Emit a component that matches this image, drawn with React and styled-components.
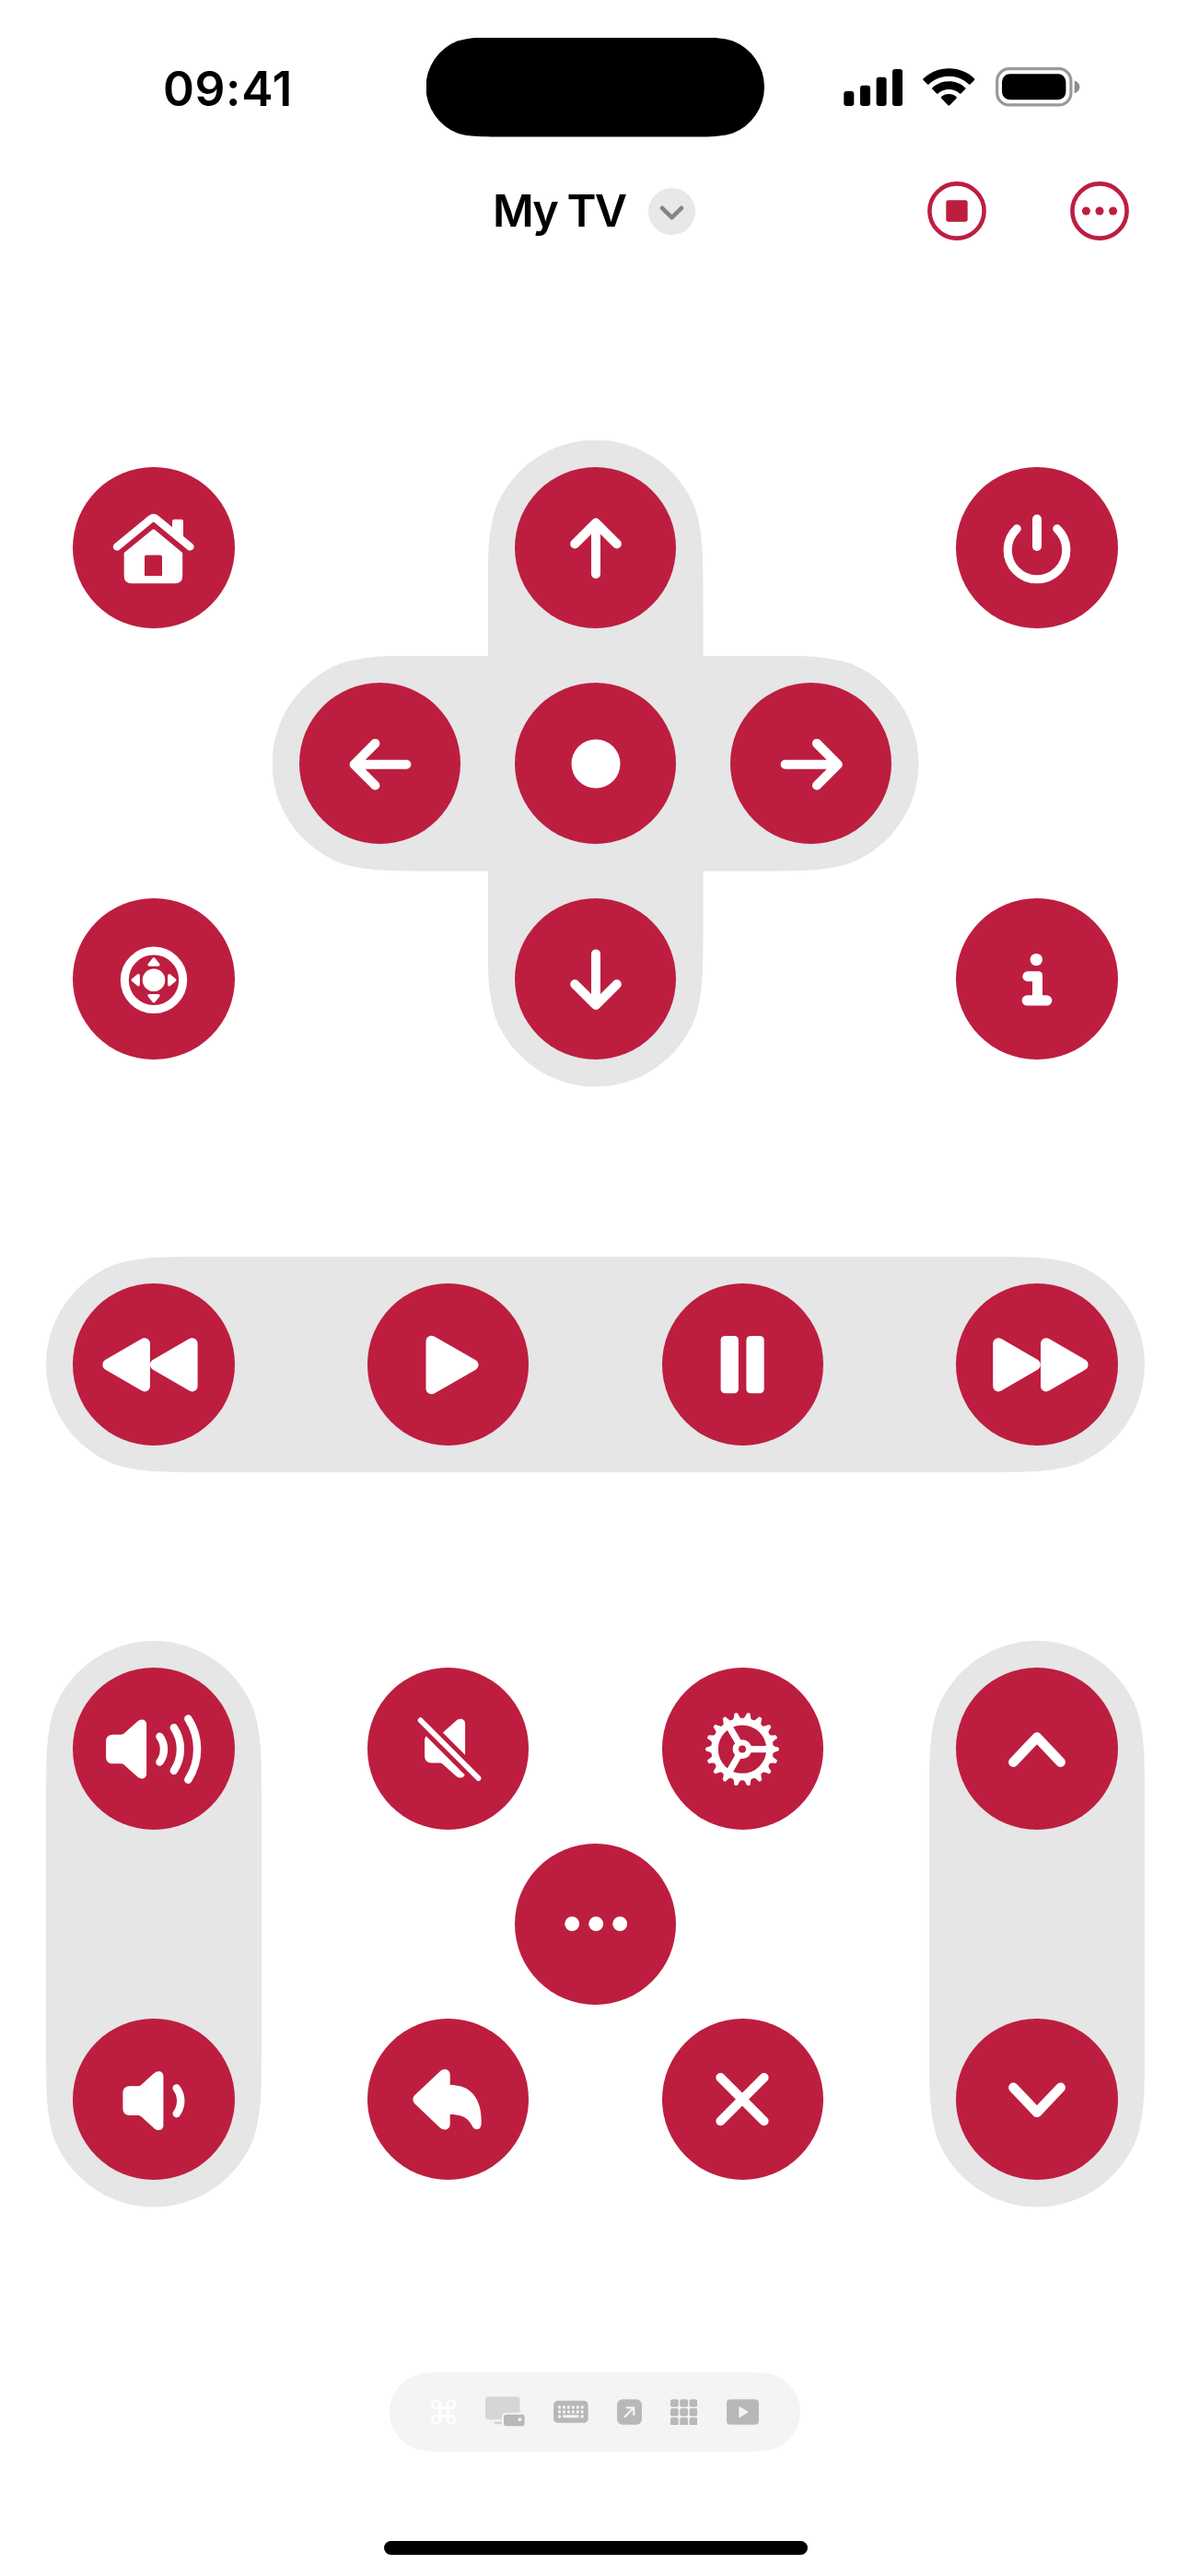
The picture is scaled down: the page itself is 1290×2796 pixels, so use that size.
import React from "react";
import styled, { createGlobalStyle } from "styled-components";

const CRIMSON = "#bd1e40";
const TRACK = "#e6e6e6";
const SOFT = "#b8b8b8";
const BAR = "#f4f4f4";

const GlobalStyle = createGlobalStyle`
  * { box-sizing: border-box; }
  body {
    margin: 0;
    background: #ffffff;
    font-family: Inter, "Liberation Sans", sans-serif;
    color: #000000;
  }
`;

/* Capsule outline whose straight edges ease gradually into the round ends. */
const capsule = (w, h) => {
  const flip = h > w;
  const long = flip ? h : w;
  const r = (flip ? w : h) / 2;
  const s = r * 2;
  const p = (x, y) => (flip ? `${y.toFixed(2)} ${x.toFixed(2)}` : `${x.toFixed(2)} ${y.toFixed(2)}`);
  const a = 1.52866 * r;
  const b = 1.08849 * r;
  const c = 0.86841 * r;
  const d = 0.63149 * r;
  const e = 0.07491 * r;
  const sweep = flip ? 0 : 1;
  return [
    `M${p(a, 0)}`,
    `L${p(long - a, 0)}`,
    `C${p(long - b, 0)} ${p(long - c, 0)} ${p(long - d, e)}`,
    `A${r} ${r} 0 0 ${sweep} ${p(long, r)}`,
    `A${r} ${r} 0 0 ${sweep} ${p(long - d, s - e)}`,
    `C${p(long - c, s)} ${p(long - b, s)} ${p(long - a, s)}`,
    `L${p(a, s)}`,
    `C${p(b, s)} ${p(c, s)} ${p(d, s - e)}`,
    `A${r} ${r} 0 0 ${sweep} ${p(0, r)}`,
    `A${r} ${r} 0 0 ${sweep} ${p(d, e)}`,
    `C${p(c, 0)} ${p(b, 0)} ${p(a, 0)}Z`,
  ].join(" ");
};

const Capsule = styled.div`
  width: ${(p) => p.$w}px;
  height: ${(p) => p.$h}px;
  background: ${(p) => p.$color || TRACK};
  clip-path: path("${(p) => capsule(p.$w, p.$h)}");
`;

const Screen = styled.main`
  width: 1290px;
  height: 2796px;
  display: flex;
  flex-direction: column;
  background: #ffffff;
  overflow: hidden;
`;

const StatusBar = styled.header`
  display: grid;
  grid-template-columns: 462.5px 367.5px 1fr;
  align-items: center;
  height: 148.5px;
  padding-top: 40.5px;
`;

const Clock = styled.time`
  padding: 2px 0 0 177px;
  font-size: 51.5px;
  line-height: 60px;
  font-weight: 600;
  letter-spacing: 0.6px;
`;

const StatusIcons = styled.div`
  display: flex;
  align-items: center;
  padding-left: 86px;
  gap: 22px;

  svg { display: block; }
`;

const NavBar = styled.nav`
  display: flex;
  align-items: center;
  height: 64px;
  margin-top: 48.5px;
  padding: 0 64px 0 535px;
`;

const Title = styled.h1`
  width: 169px;
  margin: 0;
  font-size: 48.5px;
  line-height: 60px;
  font-weight: 600;
  letter-spacing: -1.8px;
  white-space: nowrap;
`;

const PlainButton = styled.button`
  display: block;
  padding: 0;
  border: 0;
  background: none;

  svg { display: block; }
`;

const NavActions = styled.div`
  display: flex;
  gap: 91px;
  margin-left: auto;
`;

const RoundButton = styled.button`
  display: flex;
  align-items: center;
  justify-content: center;
  flex: none;
  width: 175.5px;
  height: 175.5px;
  padding: 0;
  border: 0;
  border-radius: 50%;
  background: ${CRIMSON};

  svg { display: block; flex: none; }
`;

const DirectionSection = styled.section`
  display: flex;
  align-items: center;
  justify-content: space-between;
  height: 702px;
  margin-top: 216.5px;
  padding: 0 76.25px 0 79.25px;
`;

const SideColumn = styled.div`
  display: flex;
  flex-direction: column;
  justify-content: space-between;
  height: 643.5px;
`;

const Cross = styled.div`
  display: grid;
  grid-template: repeat(3, 234px) / repeat(3, 234px);
  place-items: center;
`;

const Beam = styled(Capsule)`
  grid-area: ${(p) => p.$area};
`;

const Cell = styled.div`
  grid-area: ${(p) => p.$area};
  z-index: 1;
`;

const TransportSection = styled.section`
  margin: 184.5px 0 0 50px;
`;

const TransportBar = styled(Capsule)`
  display: flex;
  align-items: center;
  justify-content: space-between;
  padding: 0 29.25px;
`;

const KeypadSection = styled.section`
  display: flex;
  align-items: center;
  justify-content: space-between;
  width: 1193px;
  margin: 183px 0 0 50px;
`;

const Rocker = styled(Capsule)`
  display: flex;
  flex-direction: column;
  align-items: center;
  justify-content: space-between;
  padding: 29.25px 0;
`;

const Cluster = styled.div`
  display: flex;
  flex-direction: column;
  justify-content: space-between;
  width: 495.2px;
  height: 555.75px;
`;

const ClusterRow = styled.div`
  display: flex;
  justify-content: ${(p) => (p.$single ? "center" : "space-between")};
`;

const ShortcutBar = styled(Capsule)`
  display: flex;
  align-items: center;
  gap: 31.2px;
  margin: 179.5px 0 0 423px;
  padding-left: 45.3px;
`;

const HomeIndicator = styled.div`
  width: 460px;
  height: 15px;
  margin: 97px 0 0 417px;
  border-radius: 8px;
  background: #000000;
`;

/* Glyphs share a canvas whose origin is the middle of the round key. */
const Glyph = ({ children }) => (
  <svg width="176" height="176" viewBox="-88 -88 176 176" fill="#fff" stroke="none">
    {children}
  </svg>
);

const Stroke = ({ d, w = 10 }) => (
  <path d={d} fill="none" stroke="#fff" strokeWidth={w} strokeLinecap="round" strokeLinejoin="round" />
);

const Triangle = ({ points }) => (
  <polygon points={points} stroke="#fff" strokeWidth="12" strokeLinejoin="round" />
);

const SpeakerBody = () => (
  <path d="M-44 -15.3H-36C-34 -15.3 -33 -15.8 -31.5 -17.2L-18.6 -28.8C-16.5 -30.7 -15 -31.4 -13 -31.4C-10 -31.4 -7.9 -29.4 -7.9 -26.4V27.4C-7.9 30.3 -10 32.4 -12.9 32.4C-15 32.4 -16.7 31.6 -18.6 29.8L-31.5 18.2C-33 16.8 -34 16.3 -36 16.3H-44C-49.3 16.3 -51.9 13.6 -51.9 8.4V-7.4C-51.9 -12.6 -49.3 -15.3 -44 -15.3Z" />
);

const icons = {
  home: (
    <Glyph>
      <Stroke w={8.4} d="M-40 -1.6L-3.2 -31.7Q-0.3 -34 2.6 -31.7L39.4 -1.6" />
      <path d="M20 -15V-29.3Q20 -31.3 22 -31.3H30Q32 -31.3 32 -29.3V-8Z" />
      <path
        fillRule="evenodd"
        d="M-32.3 5L-2.3 -19.6Q-0.3 -21.2 1.7 -19.6L31.2 5V30Q31.2 38.2 23 38.2H-24Q-32.3 38.2 -32.3 30ZM-8 7.5Q-10 7.5 -10 9.5V30H9V9.5Q9 7.5 7 7.5Z"
      />
    </Glyph>
  ),
  dpad: (
    <Glyph>
      <circle cx="0" cy="0.8" r="31.7" fill="none" stroke="#fff" strokeWidth="9" />
      <circle cx="0" cy="0.8" r="12.3" />
      {[0, 90, 180, 270].map((a) => (
        <path
          key={a}
          transform={`translate(0 0.8) rotate(${a})`}
          d="M0 -22.8L4.9 -16.8H-4.9Z"
          stroke="#fff"
          strokeWidth="3.4"
          strokeLinejoin="round"
        />
      ))}
    </Glyph>
  ),
  power: (
    <Glyph>
      <Stroke w={9.2} d="M-21.8 -21.2A31.8 31.8 0 1 0 21.8 -21.2" />
      <Stroke d="M0 -31.4V-2" />
    </Glyph>
  ),
  info: (
    <Glyph>
      <circle cx="-0.7" cy="-21.4" r="6.7" />
      <path d="M-10.2 -8.7H1.5Q6 -8.7 6 -4.2V17.3H10.7A5.6 5.6 0 0 1 10.7 28.6H-10.7A5.6 5.6 0 0 1 -10.7 17.3H-5V2.2H-10.2A5.4 5.4 0 0 1 -10.2 -8.7Z" />
    </Glyph>
  ),
  up: (
    <Glyph>
      <Stroke d="M0 28V-27.4M-22.8 -4.6L0 -27.4L22.8 -4.6" />
    </Glyph>
  ),
  down: (
    <Glyph>
      <Stroke d="M0 -27.6V28M-22.8 5.2L0 28L22.8 5.2" />
    </Glyph>
  ),
  left: (
    <Glyph>
      <Stroke d="M28.4 0.7H-28.4M-5.6 -22.1L-28.4 0.7L-5.6 23.5" />
    </Glyph>
  ),
  right: (
    <Glyph>
      <Stroke d="M-28.4 0.7H28.8M6 -22.1L28.8 0.7L6 23.5" />
    </Glyph>
  ),
  select: (
    <Glyph>
      <circle cx="0" cy="0" r="26.5" />
    </Glyph>
  ),
  rewind: (
    <Glyph>
      <Triangle points="-10,-22.8 -10,23.4 -49.7,0.3" />
      <Triangle points="41.6,-22.8 41.6,23.4 1.9,0.3" />
    </Glyph>
  ),
  play: (
    <Glyph>
      <Triangle points="-18.5,-25.2 -18.5,26.2 26.5,0.5" />
    </Glyph>
  ),
  pause: (
    <Glyph>
      <rect x="-23.4" y="-31" width="19.3" height="62.3" rx="4.6" />
      <rect x="4.4" y="-31" width="19.3" height="62.3" rx="4.6" />
    </Glyph>
  ),
  forward: (
    <Glyph>
      <Triangle points="10,-22.8 10,23.4 49.7,0.3" />
      <Triangle points="-41.8,-22.8 -41.8,23.4 -2.1,0.3" />
    </Glyph>
  ),
  volumeUp: (
    <Glyph>
      <SpeakerBody />
      <Stroke w={8.4} d="M6.4 -13.2A23.4 23.4 0 0 1 6.4 14.6" />
      <Stroke w={8.4} d="M21.8 -22.8A42 42 0 0 1 21.8 24" />
      <Stroke w={8.4} d="M37.3 -32.6A61 61 0 0 1 37.3 33.8" />
    </Glyph>
  ),
  volumeDown: (
    <Glyph>
      <g transform="translate(18.3 0.6)">
        <SpeakerBody />
        <Stroke w={8.4} d="M6.4 -13.2A23.4 23.4 0 0 1 6.4 14.6" />
      </g>
    </Glyph>
  ),
  mute: (
    <Glyph>
      <g transform="translate(26 -0.8)">
        <SpeakerBody />
      </g>
      <path d="M-34 -34.2L36 35.8" stroke={CRIMSON} strokeWidth="15.6" />
      <Stroke w={5.8} d="M-30.4 -30.8L32.5 32.1" />
    </Glyph>
  ),
  settings: (
    <Glyph>
      <g transform="translate(0 0.6)">
        <circle r="30" fill="none" stroke="#fff" strokeWidth="7.6" />
        {Array.from({ length: 18 }, (_, i) => (
          <path key={i} transform={`rotate(${i * 20})`} d="M32 -4.6C35 -3.6 36 -2.6 37.6 -2.4A2.4 2.4 0 0 1 37.6 2.4C36 2.6 35 3.6 32 4.6Z" />
        ))}
        <circle r="7.2" fill="none" stroke="#fff" strokeWidth="6.4" />
        {[0, 120, 240].map((a) => (
          <path key={a} transform={`rotate(${a})`} d="M8 -3.6H28V3.6H8Z" />
        ))}
      </g>
    </Glyph>
  ),
  channelUp: (
    <Glyph>
      <Stroke w={10.6} d="M-25.6 14.6L0 -12.4L25.6 14.6" />
    </Glyph>
  ),
  channelDown: (
    <Glyph>
      <Stroke w={10.6} d="M-25.6 -13.2L0 13.8L25.6 -13.2" />
    </Glyph>
  ),
  more: (
    <Glyph>
      <circle cx="-25.8" cy="0.2" r="7.9" />
      <circle cx="0.2" cy="0.2" r="7.9" />
      <circle cx="26.2" cy="0.2" r="7.9" />
    </Glyph>
  ),
  back: (
    <Glyph>
      <path d="M1.7 -15C24 -15 35.7 -1 35.7 25C35.7 30.8 34 33.2 30.8 33.2C28 33.2 26.6 31.6 25.2 28.6C20.4 19.6 12.6 17 1.7 17V27.6C1.7 31.2 -0.6 33.6 -4 33.6C-6.3 33.6 -8 32.6 -10 30.8L-36 6C-37.9 4.2 -38.6 2.6 -38.6 0.8C-38.6 -1 -37.9 -2.6 -36 -4.4L-10 -29C-8 -31 -6.3 -32 -4 -32C-0.6 -32 1.7 -29.6 1.7 -26Z" />
    </Glyph>
  ),
  close: (
    <Glyph>
      <Stroke d="M-23.6 -23L23.6 24.2M23.6 -23L-23.6 24.2" />
    </Glyph>
  ),
};

const Key = ({ icon, label }) => (
  <RoundButton type="button" aria-label={label}>
    {icons[icon]}
  </RoundButton>
);

const SignalIcon = () => (
  <svg width="64" height="42" viewBox="0 0 64 42">
    <rect x="0.3" y="25" width="11" height="16" rx="3" />
    <rect x="18" y="18.7" width="11" height="22.3" rx="3" />
    <rect x="35.6" y="9.8" width="11" height="31.2" rx="3" />
    <rect x="53" y="1" width="11" height="40" rx="3" />
  </svg>
);

const WifiIcon = () => (
  <svg width="57" height="42" viewBox="0 0 57 42">
    <path d="M28.3 0.3C39.3 0.3 49 4.5 56 11.2Q56.8 12.1 56 13L51.5 17.5Q50.8 18.2 50 17.5C44.2 12 36.6 8.8 28.3 8.8C20 8.8 12.4 12 6.6 17.5Q5.8 18.2 5.1 17.5L0.6 13Q-0.2 12.1 0.6 11.2C7.6 4.5 17.3 0.3 28.3 0.3Z" />
    <path d="M28.3 14.3C35.3 14.3 41.6 17 46.2 21.2Q47 22 46.2 22.8L41.5 27.4Q40.8 28 40 27.4C36.9 24.6 32.8 22.9 28.3 22.9C23.8 22.9 19.7 24.6 16.6 27.4Q15.8 28 15.1 27.4L10.4 22.8Q9.6 22 10.4 21.2C15 17 21.3 14.3 28.3 14.3Z" />
    <path d="M28.3 28C31.5 28 34.4 29.2 36.5 31.1Q37.2 31.9 36.5 32.7L29.2 40.2Q28.3 41 27.4 40.2L20.1 32.7Q19.4 31.9 20.1 31.1C22.2 29.2 25.1 28 28.3 28Z" />
  </svg>
);

const BatteryIcon = () => (
  <svg width="92" height="43" viewBox="0 0 92 43">
    <rect x="1.7" y="1.7" width="80.2" height="39.2" rx="13" fill="none" stroke="#999" strokeWidth="3.2" />
    <rect x="7" y="7.3" width="69.4" height="28" rx="8.5" />
    <path d="M85.7 14.4C89.3 15.4 91.4 18.2 91.4 21.3C91.4 24.4 89.3 27.2 85.7 28.2Z" fill="#8c8c8c" />
  </svg>
);

const CommandIcon = () => (
  <svg width="27.7" height="28" viewBox="0 0 28 28" fill="none" stroke="#fff" strokeWidth="2.7">
    <path d="M9.7 9.7V5.55A4.15 4.15 0 1 0 5.55 9.7H22.45A4.15 4.15 0 1 0 18.3 5.55V22.45A4.15 4.15 0 1 0 22.45 18.3H5.55A4.15 4.15 0 1 0 9.7 22.45Z" />
  </svg>
);

const DevicesIcon = () => (
  <svg width="42.7" height="36" viewBox="0 0 42.7 36">
    <rect x="0" y="1.2" width="37.5" height="25" rx="4" fill="#d6d6d6" />
    <rect x="9.8" y="28.2" width="12" height="3" rx="1.5" fill="#d6d6d6" />
    <rect x="18" y="18.8" width="26.5" height="16.5" rx="4.4" fill={BAR} />
    <rect x="20" y="20.8" width="22.6" height="12.4" rx="2.6" fill={SOFT} />
    <circle cx="37.5" cy="26.2" r="1.9" fill={BAR} />
  </svg>
);

const KeyboardIcon = () => (
  <svg width="37.7" height="26" viewBox="0 0 37.7 26">
    <rect x="0" y="0.8" width="37.7" height="24" rx="4.6" fill={SOFT} />
    <g fill={BAR}>
      {[0, 1, 2].map((row) =>
        [0, 1, 2, 3, 4, 5]
          .filter((col) => row < 2 || col === 0 || col === 5)
          .map((col) => (
            <rect key={`${row}-${col}`} x={5.1 + col * 4.92} y={6.2 + row * 5} width="2.9" height="3.2" rx="0.7" />
          ))
      )}
      <rect x="10" y="16.3" width="17.6" height="3" rx="0.7" />
    </g>
  </svg>
);

const LaunchIcon = () => (
  <svg width="27" height="28" viewBox="0 0 27 28">
    <rect x="0" y="0.3" width="27" height="27.4" rx="6" fill={SOFT} />
    <path d="M8.7 19L18 9.6M10.6 9.3H18.3V17" fill="none" stroke={BAR} strokeWidth="2.2" strokeLinecap="round" strokeLinejoin="round" />
  </svg>
);

const GridIcon = () => (
  <svg width="29.3" height="28.6" viewBox="0 0 29.3 28.6" fill={SOFT}>
    {[0, 1, 2].map((row) =>
      [0, 1, 2].map((col) => (
        <rect key={`${row}-${col}`} x={col * 10.3} y={0.2 + row * 9.9} width="8.7" height="8.4" rx="2" />
      ))
    )}
  </svg>
);

const PlayBoxIcon = () => (
  <svg width="35" height="28" viewBox="0 0 35 28">
    <rect x="0" y="0.3" width="35" height="27.4" rx="4" fill={SOFT} />
    <path d="M14 8.8L22.8 14L14 19.3Z" fill={BAR} stroke={BAR} strokeWidth="1.4" strokeLinejoin="round" />
  </svg>
);

export default function App() {
  return (
    <>
      <GlobalStyle />
      <Screen>
        <StatusBar>
          <Clock>09:41</Clock>
          <Capsule $w={367.5} $h={108} $color="#000" />
          <StatusIcons>
            <SignalIcon />
            <WifiIcon />
            <BatteryIcon />
          </StatusIcons>
        </StatusBar>

        <NavBar>
          <Title>My TV</Title>
          <PlainButton type="button" aria-label="Choose device">
            <svg width="51" height="51" viewBox="0 0 51 51">
              <circle cx="25.5" cy="25.5" r="25.5" fill="#e8e8e8" />
              <path d="M15 21.8L25.5 32.2L36 21.8" fill="none" stroke="#858589" strokeWidth="4.6" strokeLinecap="round" strokeLinejoin="round" />
            </svg>
          </PlainButton>
          <NavActions>
            <PlainButton type="button" aria-label="Stop">
              <svg width="64" height="64" viewBox="0 0 64 64">
                <circle cx="32" cy="32" r="29.6" fill="none" stroke={CRIMSON} strokeWidth="4.6" />
                <rect x="20.3" y="20.3" width="23.4" height="23.4" rx="2.6" fill={CRIMSON} />
              </svg>
            </PlainButton>
            <PlainButton type="button" aria-label="Options">
              <svg width="64" height="64" viewBox="0 0 64 64" fill={CRIMSON}>
                <circle cx="32" cy="32" r="29.6" fill="none" stroke={CRIMSON} strokeWidth="4.6" />
                <circle cx="17.4" cy="32" r="4.5" />
                <circle cx="32" cy="32" r="4.5" />
                <circle cx="46.6" cy="32" r="4.5" />
              </svg>
            </PlainButton>
          </NavActions>
        </NavBar>

        <DirectionSection>
          <SideColumn>
            <Key icon="home" label="Home" />
            <Key icon="dpad" label="Touchpad" />
          </SideColumn>
          <Cross>
            <Beam $area="1 / 2 / 4 / 3" $w={234} $h={702} />
            <Beam $area="2 / 1 / 3 / 4" $w={702} $h={234} />
            <Cell $area="1 / 2"><Key icon="up" label="Up" /></Cell>
            <Cell $area="2 / 1"><Key icon="left" label="Left" /></Cell>
            <Cell $area="2 / 2"><Key icon="select" label="Select" /></Cell>
            <Cell $area="2 / 3"><Key icon="right" label="Right" /></Cell>
            <Cell $area="3 / 2"><Key icon="down" label="Down" /></Cell>
          </Cross>
          <SideColumn>
            <Key icon="power" label="Power" />
            <Key icon="info" label="Info" />
          </SideColumn>
        </DirectionSection>

        <TransportSection>
          <TransportBar $w={1193} $h={234}>
            <Key icon="rewind" label="Rewind" />
            <Key icon="play" label="Play" />
            <Key icon="pause" label="Pause" />
            <Key icon="forward" label="Fast forward" />
          </TransportBar>
        </TransportSection>

        <KeypadSection>
          <Rocker $w={234} $h={614.5}>
            <Key icon="volumeUp" label="Volume up" />
            <Key icon="volumeDown" label="Volume down" />
          </Rocker>
          <Cluster>
            <ClusterRow>
              <Key icon="mute" label="Mute" />
              <Key icon="settings" label="Settings" />
            </ClusterRow>
            <ClusterRow $single>
              <Key icon="more" label="More" />
            </ClusterRow>
            <ClusterRow>
              <Key icon="back" label="Back" />
              <Key icon="close" label="Close" />
            </ClusterRow>
          </Cluster>
          <Rocker $w={234} $h={614.5}>
            <Key icon="channelUp" label="Channel up" />
            <Key icon="channelDown" label="Channel down" />
          </Rocker>
        </KeypadSection>

        <ShortcutBar $w={446} $h={86} $color={BAR}>
          <CommandIcon />
          <DevicesIcon />
          <KeyboardIcon />
          <LaunchIcon />
          <GridIcon />
          <PlayBoxIcon />
        </ShortcutBar>

        <HomeIndicator />
      </Screen>
    </>
  );
}
